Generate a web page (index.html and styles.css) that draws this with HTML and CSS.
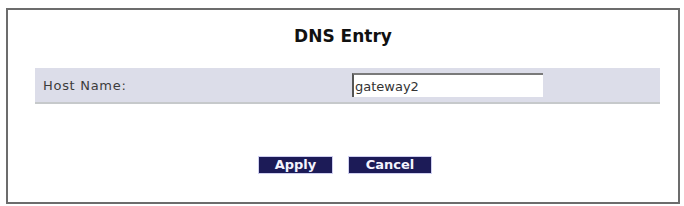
FILE: index.html
```html
<!DOCTYPE html>
<html lang="en">
<head>
    <meta charset="UTF-8">
    <title>DNS Entry</title>
    <link rel="stylesheet" href="styles.css">
</head>
<body>
<div class="frame">
    <div class="title">DNS Entry</div>
    <div class="row">
        <div class="label">Host Name:</div>
        <div class="field"><input type="text" class="host" value="gateway2"></div>
    </div>
    <div class="buttons">
        <input type="button" class="btn apply" value="Apply">
        <input type="button" class="btn cancel" value="Cancel">
    </div>
</div>
</body>
</html>
```

FILE: styles.css
```css
body{
    margin:0;
    background:#fff;
    font-family:"DejaVu Sans",Verdana,sans-serif;
}
.frame{
    margin:8px 4px 0 6px;
    height:196px;
    border:2px solid #6c6c6c;
    box-sizing:border-box;
}
.title{
    text-align:center;
    font-weight:bold;
    font-size:17px;
    line-height:20px;
    color:#111;
    padding-top:16px;
}
.row{
    margin:22px 18px 0 27px;
    height:34px;
    background:#dcdde9;
    border-bottom:2px solid #c6c9cb;
    display:flex;
    align-items:center;
}
.label{
    width:309px;
    padding-left:8px;
    font-size:13px;
    letter-spacing:0.7px;
    color:#3c3c3c;
}
.host{
    width:191px;
    height:24px;
    box-sizing:border-box;
    border:none;
    border-top:2px solid #7a7a7a;
    border-left:2px solid #555;
    padding:0 1px;
    font-family:"DejaVu Sans",Verdana,sans-serif;
    font-size:13px;
    color:#333;
    background:#fff;
}
.buttons{
    margin-top:52px;
    padding-left:4px;
    display:flex;
    justify-content:center;
    gap:15px;
}
.btn{
    height:18px;
    padding:0;
    background:#1c1b57;
    color:#f4f4ff;
    border:1px solid #cfcff0;
    font-family:"DejaVu Sans",Verdana,sans-serif;
    font-weight:bold;
    font-size:13px;
    line-height:14px;
}
.apply{
    width:75px;
}
.cancel{
    width:84px;
}
```
